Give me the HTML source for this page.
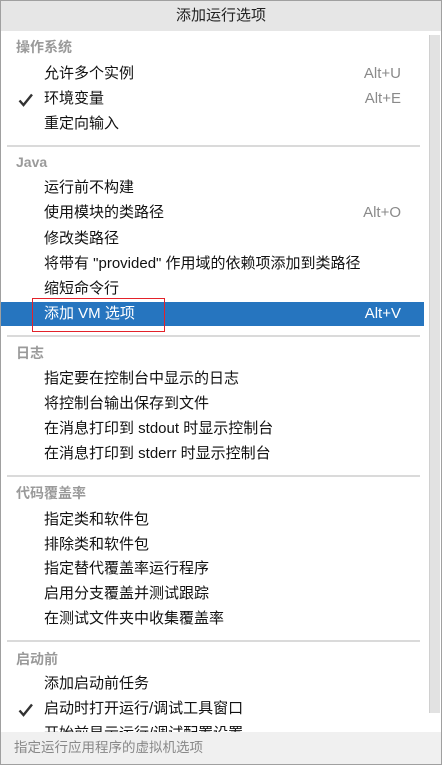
<!DOCTYPE html>
<html><head><meta charset="utf-8"><style>
*{margin:0;padding:0;box-sizing:border-box}
body{width:442px;height:765px;overflow:hidden;background:#fff;font-family:"Liberation Sans","Noto Sans CJK SC",sans-serif;font-size:15px;color:#111}
.frame{position:absolute;left:0;top:0;width:442px;height:765px;border:1px solid #a0a0a0}
.title{position:absolute;left:1px;top:1px;width:440px;height:30px;background:#e6e6e6;text-align:center;line-height:30px;font-size:15px;color:#222}
.sb{position:absolute;left:429px;top:35px;width:11px;height:678px;background:#e2e2e2;border-left:1px solid #d0d0d0}
.t{position:absolute;left:44px;white-space:nowrap;line-height:20px}
.h{position:absolute;left:16px;font-weight:bold;color:#9a9a9a;line-height:20px;font-size:14px}
.k{position:absolute;right:41px;color:#8a8a8a;line-height:20px;font-size:15px}
.c{position:absolute;left:18px;width:16px;height:14px}
.sep{position:absolute;left:7px;width:413px;height:2px;background:#dadada}
.sel{position:absolute;left:1px;top:302px;width:423px;height:24px;background:#2675bf}
.red{position:absolute;left:32px;top:298px;width:133px;height:34px;border:1.5px solid #e3222a}
.foot{position:absolute;left:1px;top:732px;width:440px;height:32px;background:#f0f0f0;color:#888;font-size:13.5px;line-height:32px;padding-left:13px}
</style></head><body>
<div class="frame"></div>
<div class="title">添加运行选项</div>
<div class="sb"></div>
<div class="h" style="top:37px">操作系统</div>
<div class="t" style="top:64px">允许多个实例</div><div class="k" style="top:64px">Alt+U</div>
<svg class="c" style="top:93px" viewBox="0 0 16 14"><path d="M1.5 7.5 L5.5 12 L14 1.5" fill="none" stroke="#333" stroke-width="2.4"/></svg><div class="t" style="top:89px">环境变量</div><div class="k" style="top:89px">Alt+E</div>
<div class="t" style="top:114px">重定向输入</div>
<div class="sep" style="top:145px"></div>
<div class="h" style="top:152px">Java</div>
<div class="t" style="top:178px">运行前不构建</div>
<div class="t" style="top:203px">使用模块的类路径</div><div class="k" style="top:203px">Alt+O</div>
<div class="t" style="top:229px">修改类路径</div>
<div class="t" style="top:254px">将带有 "provided" 作用域的依赖项添加到类路径</div>
<div class="t" style="top:279px">缩短命令行</div>
<div class="sel"></div>
<div class="t" style="top:304px;color:#fff">添加 VM 选项</div><div class="k" style="top:304px;color:#fff">Alt+V</div>
<div class="red"></div>
<div class="sep" style="top:335px"></div>
<div class="h" style="top:343px">日志</div>
<div class="t" style="top:369px">指定要在控制台中显示的日志</div>
<div class="t" style="top:394px">将控制台输出保存到文件</div>
<div class="t" style="top:419px">在消息打印到 stdout 时显示控制台</div>
<div class="t" style="top:444px">在消息打印到 stderr 时显示控制台</div>
<div class="sep" style="top:475px"></div>
<div class="h" style="top:483px">代码覆盖率</div>
<div class="t" style="top:510px">指定类和软件包</div>
<div class="t" style="top:535px">排除类和软件包</div>
<div class="t" style="top:559px">指定替代覆盖率运行程序</div>
<div class="t" style="top:584px">启用分支覆盖并测试跟踪</div>
<div class="t" style="top:609px">在测试文件夹中收集覆盖率</div>
<div class="sep" style="top:640px"></div>
<div class="h" style="top:649px">启动前</div>
<div class="t" style="top:674px">添加启动前任务</div>
<svg class="c" style="top:703px" viewBox="0 0 16 14"><path d="M1.5 7.5 L5.5 12 L14 1.5" fill="none" stroke="#333" stroke-width="2.4"/></svg><div class="t" style="top:699px">启动时打开运行/调试工具窗口</div>
<div class="t" style="top:724px">开始前显示运行/调试配置设置</div>
<div class="foot">指定运行应用程序的虚拟机选项</div>
</body></html>
